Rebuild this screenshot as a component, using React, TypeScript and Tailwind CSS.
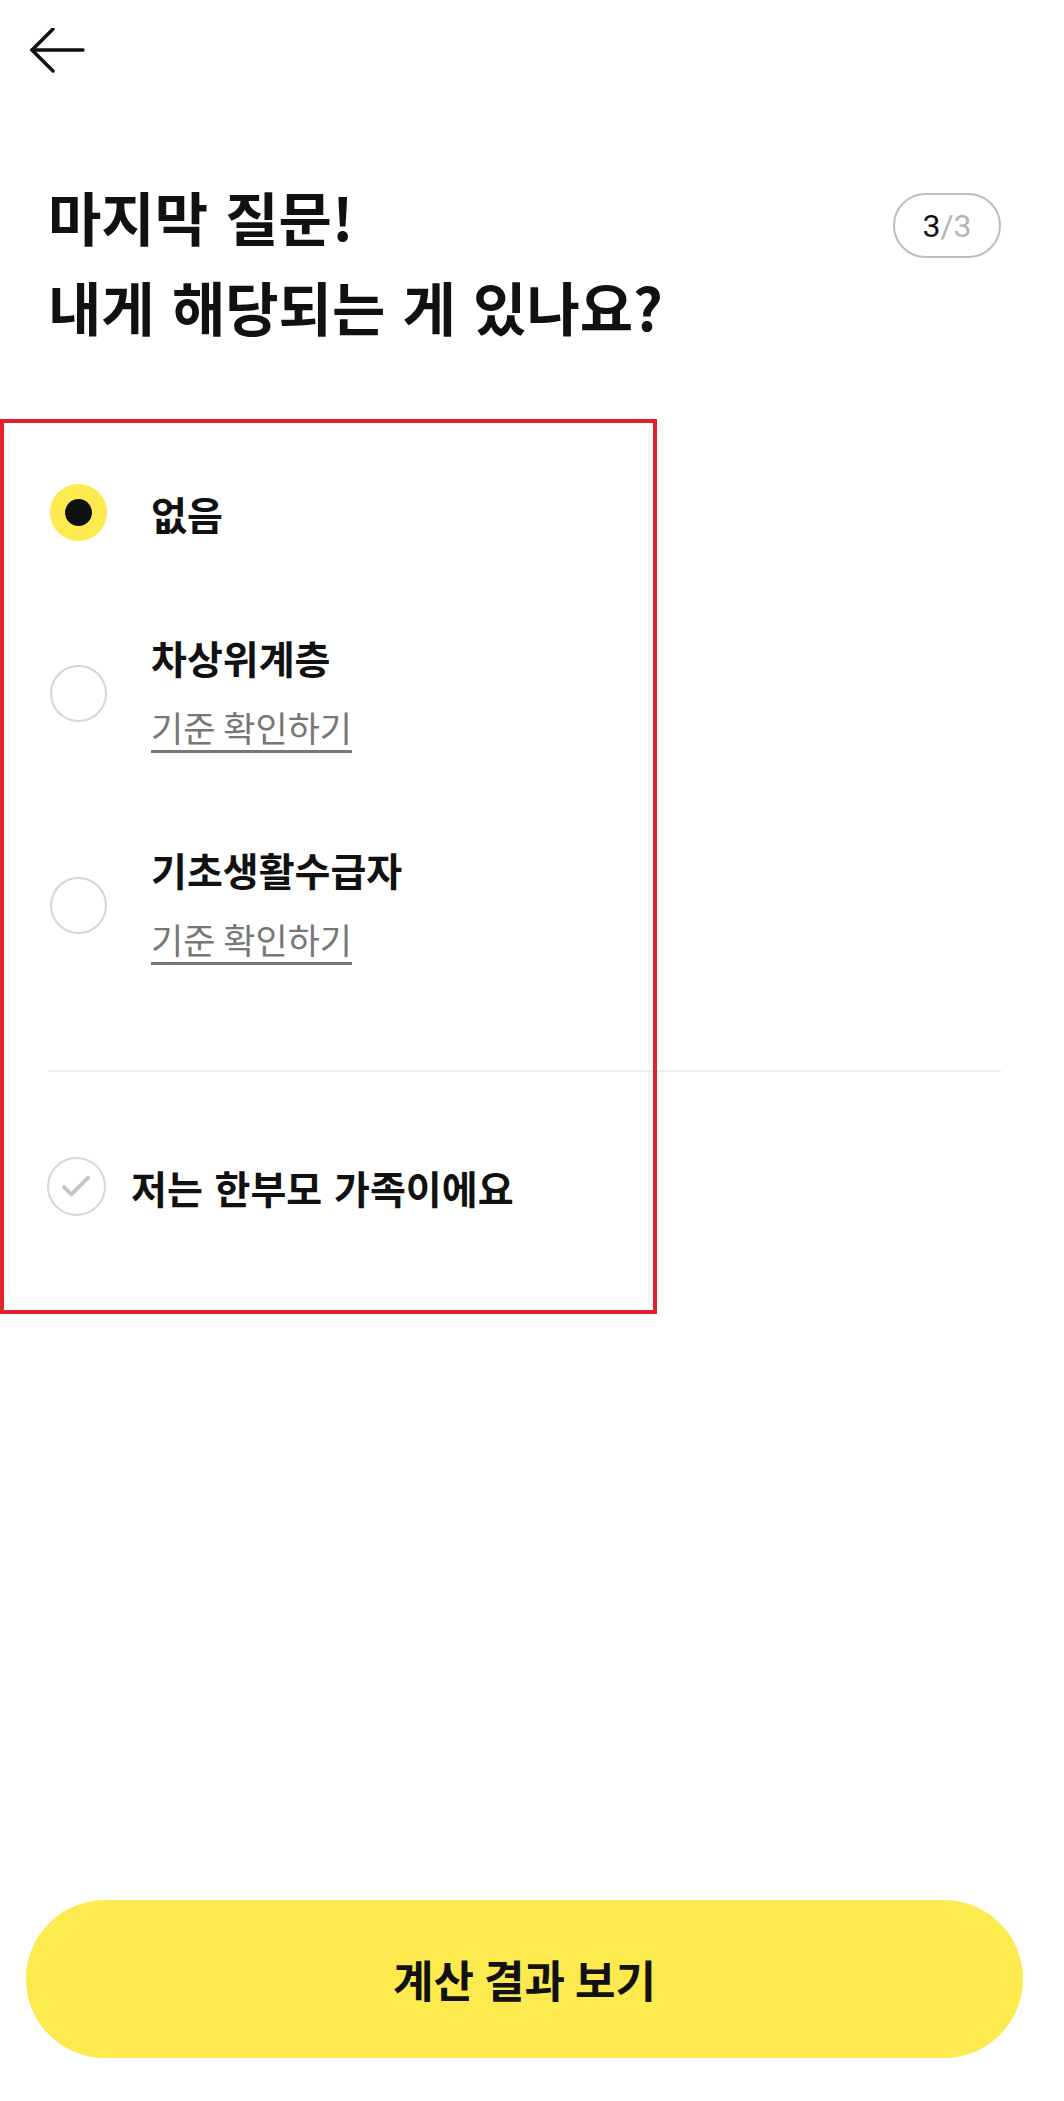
import { useState } from "react";

const options = [
  { id: "none", label: "없음", link: false },
  { id: "near", label: "차상위계층", link: true },
  { id: "basic", label: "기초생활수급자", link: true },
];

function Radio({ checked }: { checked: boolean }) {
  if (checked) {
    return (
      <span className="flex h-[57px] w-[57px] shrink-0 items-center justify-center rounded-full bg-[#fcea4f]">
        <span className="h-[27px] w-[27px] rounded-full bg-[#111]" />
      </span>
    );
  }
  return <span className="h-[57px] w-[57px] shrink-0 rounded-full border-2 border-[#d6d6d6]" />;
}

export default function App() {
  const [selected, setSelected] = useState("none");
  const [single, setSingle] = useState(false);

  return (
    <div className="relative flex h-[2101px] w-[1049px] flex-col bg-white font-['Noto_Sans_CJK_KR','Noto_Sans',sans-serif] text-[#111]">
      {/* Back button */}
      <header className="px-[30px] pt-[28px]">
        <svg width="56" height="46" viewBox="0 0 56 46" fill="none" stroke="#111" strokeWidth="3.5" strokeLinecap="round" strokeLinejoin="round">
          <path d="M23 1 L2 22 L23 43" />
          <path d="M2 22 H53" />
        </svg>
      </header>

      {/* Question title */}
      <section className="mt-[97px] flex items-start justify-between px-[48px]">
        <h1 className="text-[58px] font-bold leading-[90px] [word-spacing:4px]">
          마지막 질문!
          <br />
          내게 해당되는 게 있나요?
        </h1>
        <div className="mt-[22px] flex h-[65px] w-[108px] items-center justify-center rounded-full border-2 border-[#bdbdbd] font-['Roboto',sans-serif] text-[32px]">
          <span className="text-[#111]">3</span>
          <span className="text-[#b5b5b5]">/3</span>
        </div>
      </section>

      {/* Options */}
      <ul className="mt-[133px] flex flex-col gap-[92px] pl-[50px]">
        {options.map((o) => (
          <li key={o.id} className="flex cursor-pointer items-center gap-[44px]" onClick={() => setSelected(o.id)}>
            <Radio checked={selected === o.id} />
            {o.link ? (
              <div className="flex flex-col items-start">
                <p className="text-[39px] font-bold leading-[48px]">{o.label}</p>
                <a className="mt-[26px] border-b-[3px] border-[#777] pb-[3px] text-[35px] leading-[40px] text-[#777]">
                  기준 확인하기
                </a>
              </div>
            ) : (
              <p className="text-[39px] font-bold leading-[48px]">{o.label}</p>
            )}
          </li>
        ))}
      </ul>

      <div className="mx-[48px] mt-[105px] h-[2px] bg-[#efefef]" />

      {/* Single parent checkbox */}
      <label className="mt-[85px] flex cursor-pointer items-center gap-[25px] pl-[47px]" onClick={() => setSingle(!single)}>
        <span className="flex h-[59px] w-[59px] shrink-0 items-center justify-center rounded-full border-2 border-[#d6d6d6]">
          <svg width="59" height="59" viewBox="0 0 59 59" fill="none" stroke={single ? "#111" : "#c4c4c4"} strokeWidth="4" strokeLinecap="round" strokeLinejoin="round">
            <path d="M16 30 L24 38 L42 20" />
          </svg>
        </span>
        <span className="text-[39px] font-bold leading-[48px] [word-spacing:3px]">저는 한부모 가족이에요</span>
      </label>

      {/* Submit */}
      <button className="mx-[26px] mb-[43px] mt-auto flex h-[158px] items-center justify-center rounded-full bg-[#fcea4f] text-[44px] font-bold text-[#111]">
        계산 결과 보기
      </button>

      {/* Red highlight annotation */}
      <div className="pointer-events-none absolute left-0 top-[419px] h-[895px] w-[657px] border-4 border-[#e5202e]" />
    </div>
  );
}
